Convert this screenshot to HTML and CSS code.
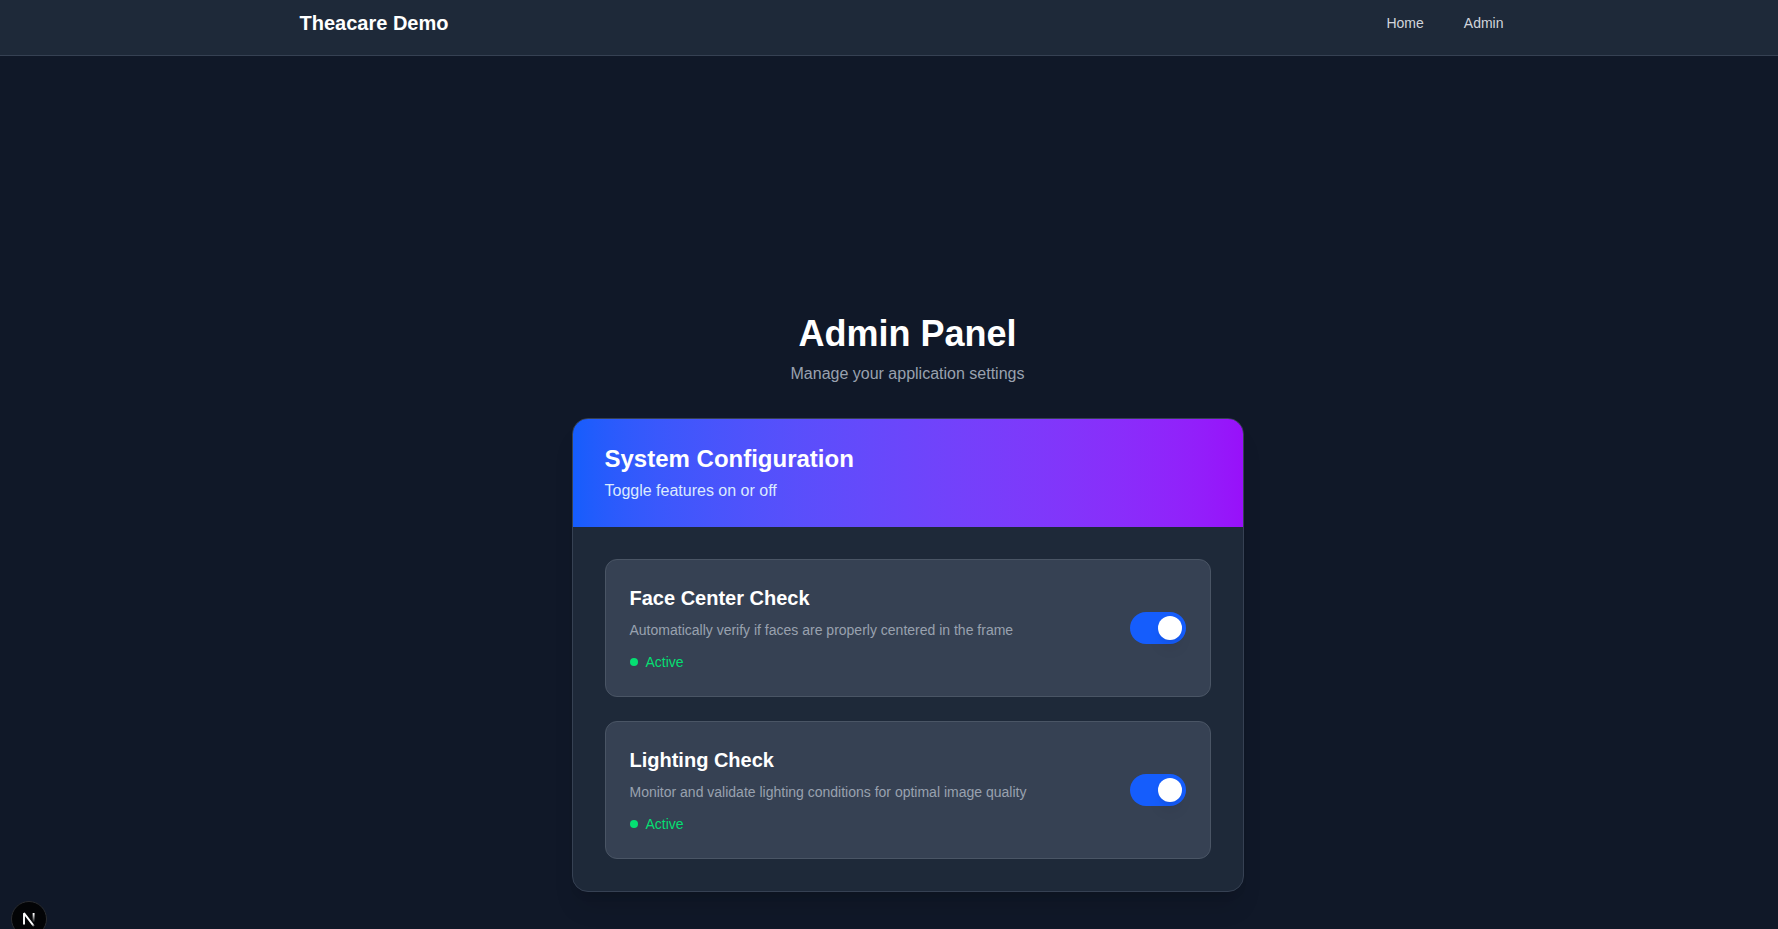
FILE: index.html
```html
<!DOCTYPE html>
<html lang="en">
<head>
<meta charset="utf-8">
<title>Theacare Demo</title>
<link rel="stylesheet" href="styles.css">
</head>
<body>
<div class="page">
  <nav class="nav">
    <div class="nav-inner">
      <span class="brand">Theacare Demo</span>
      <div class="links"><a class="link">Home</a><a class="link">Admin</a></div>
    </div>
  </nav>
  <main class="main">
    <div class="panel">
      <header class="heading">
        <h1 class="title">Admin Panel</h1>
        <p class="subtitle">Manage your application settings</p>
      </header>
      <section class="card">
        <div class="card-head">
          <h2 class="card-title">System Configuration</h2>
          <p class="card-sub">Toggle features on or off</p>
        </div>
        <div class="card-body">
          <div class="item">
            <div>
              <h3 class="item-title">Face Center Check</h3>
              <p class="item-desc">Automatically verify if faces are properly centered in the frame</p>
              <div class="status"><span class="dot"></span><span>Active</span></div>
            </div>
            <div class="toggle"><span class="knob"></span></div>
          </div>
          <div class="item">
            <div>
              <h3 class="item-title">Lighting Check</h3>
              <p class="item-desc">Monitor and validate lighting conditions for optimal image quality</p>
              <div class="status"><span class="dot"></span><span>Active</span></div>
            </div>
            <div class="toggle"><span class="knob"></span></div>
          </div>
        </div>
      </section>
    </div>
  </main>
</div>
<div class="badge">
  <svg width="40" height="40" viewBox="0 0 40 40" fill="none">
    <defs>
      <linearGradient id="diag" x1="20" y1="20.5" x2="25.5" y2="28" gradientUnits="userSpaceOnUse"><stop stop-color="#fff"/><stop offset="0.604" stop-color="#fff"/><stop offset="1" stop-color="#fff" stop-opacity="0.1"/></linearGradient>
      <linearGradient id="stem" x1="24.6" y1="15" x2="24.6" y2="23.5" gradientUnits="userSpaceOnUse"><stop stop-color="#fff"/><stop offset="1" stop-color="#fff" stop-opacity="0"/></linearGradient>
    </defs>
    <path d="M15 25.4V14.2L24.9 27.2" stroke="url(#diag)" stroke-width="1.9" stroke-linejoin="bevel"/>
    <path d="M24.6 14V23.5" stroke="url(#stem)" stroke-width="1.9"/>
  </svg>
</div>
</body>
</html>
```
FILE: styles.css
```css
* { box-sizing: border-box; margin: 0; padding: 0; }
html, body { height: 100%; overflow: hidden; }
body { background: #101828; font-family: "Liberation Sans", Arial, sans-serif; }
.page { width: 1815px; height: 929px; }
.nav { height: 56px; padding-bottom: 9px; background: #1e2939; border-bottom: 1px solid #364153; }
.nav-inner { max-width: 1280px; height: 46px; margin: 0 auto; padding: 0 32px; display: flex; align-items: center; justify-content: space-between; }
.brand { color: #fff; font-size: 20px; line-height: 28px; font-weight: 700; }
.links { display: flex; gap: 16px; }
.link { padding: 0 12px; color: #d1d5dc; font-size: 14px; line-height: 20px; }
.main { padding-top: 258px; display: flex; justify-content: center; }
.panel { width: 672px; }
.heading { text-align: center; margin-bottom: 32px; }
.title { color: #fff; font-size: 36px; line-height: 40px; font-weight: 700; margin-bottom: 8px; }
.subtitle { color: #99a1af; font-size: 16px; line-height: 24px; }
.card { background: #1e2939; border: 1px solid #364153; border-radius: 16px; overflow: hidden; box-shadow: 0 20px 25px -5px rgba(0, 0, 0, 0.1), 0 8px 10px -6px rgba(0, 0, 0, 0.1); }
.card-head { padding: 24px 32px; background: linear-gradient(to right in oklab, #155dfc, #9810fa); }
.card-title { color: #fff; font-size: 24px; line-height: 32px; font-weight: 700; }
.card-sub { margin-top: 4px; color: #dbeafe; font-size: 16px; line-height: 24px; }
.card-body { padding: 32px; display: flex; flex-direction: column; gap: 24px; }
.item { padding: 24px; display: flex; align-items: center; justify-content: space-between; background: #364153; border: 1px solid #4a5565; border-radius: 12px; }
.item-title { color: #fff; font-size: 20px; line-height: 28px; font-weight: 700; margin-bottom: 8px; }
.item-desc { color: #99a1af; font-size: 14px; line-height: 20px; }
.status { margin-top: 12px; display: flex; align-items: center; gap: 8px; color: #05df72; font-size: 14px; line-height: 20px; }
.dot { width: 8px; height: 8px; border-radius: 50%; background: #05df72; }
.toggle { width: 56px; height: 32px; padding: 4px; display: flex; justify-content: flex-end; border-radius: 16px; background: #155dfc; }
.knob { width: 24px; height: 24px; border-radius: 50%; background: #fff; box-shadow: 0 10px 15px -3px rgba(0, 0, 0, 0.1), 0 4px 6px -4px rgba(0, 0, 0, 0.1); }
.badge { position: fixed; left: 11px; top: 901px; width: 36px; height: 36px; display: flex; align-items: center; justify-content: center; border-radius: 50%; background: #030406; border: 1px solid #2a2c30; }
.badge svg { flex: none; }
```
